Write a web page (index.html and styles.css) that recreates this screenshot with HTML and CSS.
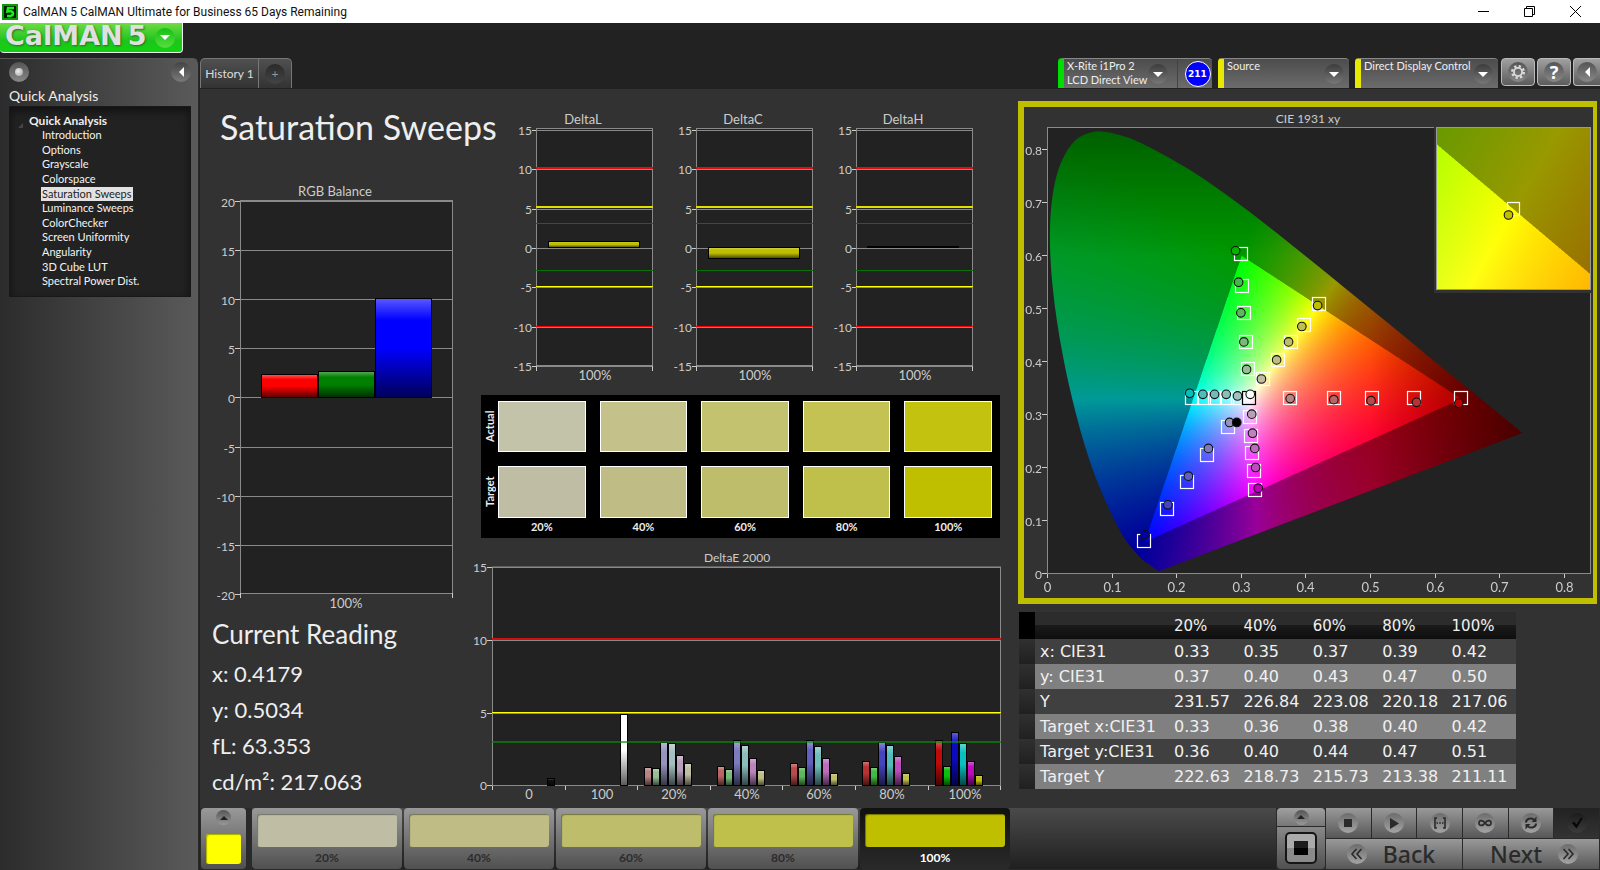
FILE: index.html
```html
<!DOCTYPE html>
<html lang="en">
<head>
<meta charset="utf-8">
<title>CalMAN 5 CalMAN Ultimate for Business</title>
<link rel="stylesheet" href="styles.css">
</head>
<body>
<header class="titlebar">
  <svg class="app-icon" viewBox="0 0 16 16" aria-hidden="true"><rect width="16" height="16" fill="#021a02"/><rect x="1" y="1" width="14" height="14" fill="none" stroke="#0c9a0c" stroke-width="2"/><path d="M12 4H6L5.500 7.500Q11 6.500 11 9.500Q11 12.500 5 12" fill="none" stroke="#19f019" stroke-width="2.600"/></svg>
  <span class="window-title">CalMAN 5 CalMAN Ultimate for Business 65 Days Remaining</span>
  <div class="window-buttons">
    <button aria-label="Minimize"><svg viewBox="0 0 11 11"><path d="M0 5.500H11"/></svg></button>
    <button aria-label="Restore"><svg viewBox="0 0 11 11"><path d="M.5 2.500H8.500V10.500H.5ZM2.500 2.500V.5H10.500V8.500H8.500"/></svg></button>
    <button aria-label="Close"><svg viewBox="0 0 11 11"><path d="M0 0L11 11M11 0L0 11"/></svg></button>
  </div>
</header>

<div class="brandbar">
  <button class="brand"><span class="brand-name">CalMAN</span><span class="brand-name">5</span><span class="brand-arrow"><i class="caret"></i></span></button>
</div>

<div class="workspace">
  <aside class="sidebar">
    <div class="sidebar-top">
      <button class="knob" aria-label="Pin"><i class="dot"></i></button>
      <button class="knob knob-flat" aria-label="Collapse"><i class="caret-left"></i></button>
    </div>
    <h2 class="sidebar-title">Quick Analysis</h2>
    <nav class="tree">
      <span class="tree-root">Quick Analysis</span>
      <ul class="tree-list">
        <li><a href="#">Introduction</a></li>
        <li><a href="#">Options</a></li>
        <li><a href="#">Grayscale</a></li>
        <li><a href="#">Colorspace</a></li>
        <li><a href="#" class="current">Saturation Sweeps</a></li>
        <li><a href="#">Luminance Sweeps</a></li>
        <li><a href="#">ColorChecker</a></li>
        <li><a href="#">Screen Uniformity</a></li>
        <li><a href="#">Angularity</a></li>
        <li><a href="#">3D Cube LUT</a></li>
        <li><a href="#">Spectral Power Dist.</a></li>
      </ul>
    </nav>
  </aside>

  <div class="stage">
    <div class="toolbar">
      <div class="tabs">
        <button class="tab">History 1</button>
        <button class="tab tab-add" aria-label="Add"><span class="plus">+</span></button>
      </div>
      <div class="devices">
        <div class="device device-on device-meter">
          <button class="device-main"><span>X-Rite i1Pro 2<br>LCD Direct View</span><span class="drop"><i class="caret"></i></span></button>
          <button class="badge-cell"><span class="badge">211</span></button>
        </div>
        <div class="device device-source">
          <button class="device-main"><span>Source</span><span class="drop"><i class="caret"></i></span></button>
        </div>
        <div class="device device-display">
          <button class="device-main"><span>Direct Display Control</span><span class="drop"><i class="caret"></i></span></button>
        </div>
        <button class="tool" aria-label="Settings"><span class="tool-disc"><svg viewBox="0 0 20 20"><circle cx="10" cy="10" r="4.500" fill="none" stroke="#ddd" stroke-width="2"/><circle cx="10" cy="10" r="6.500" fill="none" stroke="#ddd" stroke-width="2.500" stroke-dasharray="2.550 2.550"/></svg></span></button>
        <button class="tool" aria-label="Help"><span class="tool-disc">?</span></button>
        <button class="tool tool-last" aria-label="Hide"><span class="tool-disc"><i class="caret-left"></i></span></button>
      </div>
    </div>

    <main class="content">
      <section class="col col-left">
        <h1 class="page-title">Saturation Sweeps</h1>
        <svg id="rgb" class="chart rgb-chart" viewBox="200 180 272 432" role="img" aria-label="RGB Balance"></svg>
        <h2 class="reading-title">Current Reading</h2>
        <ul class="readings">
          <li>x: 0.4179</li>
          <li>y: 0.5034</li>
          <li>fL: 63.353</li>
          <li>cd/m²: 217.063</li>
        </ul>
      </section>

      <section class="col col-mid">
        <div class="deltas">
          <svg id="dl" class="chart" viewBox="512 110 160 275" role="img" aria-label="DeltaL"></svg>
          <svg id="dc" class="chart" viewBox="512 110 160 275" role="img" aria-label="DeltaC"></svg>
          <svg id="dh" class="chart" viewBox="512 110 160 275" role="img" aria-label="DeltaH"></svg>
        </div>
        <div class="swatches">
          <span class="swatch-side">Actual</span>
          <i class="swatch y20a"></i><i class="swatch y40a"></i><i class="swatch y60a"></i><i class="swatch y80a"></i><i class="swatch y100a"></i>
          <span class="swatch-side">Target</span>
          <i class="swatch y20"></i><i class="swatch y40"></i><i class="swatch y60"></i><i class="swatch y80"></i><i class="swatch y100"></i>
          <span></span><span class="swatch-label">20%</span><span class="swatch-label">40%</span><span class="swatch-label">60%</span><span class="swatch-label">80%</span><span class="swatch-label">100%</span>
        </div>
        <svg id="de" class="chart de-chart" viewBox="472 545 530 258" role="img" aria-label="DeltaE 2000"></svg>
      </section>

      <section class="col col-right">
        <div class="cie-panel">
          <svg id="cie" class="chart" viewBox="1024 107 569 491" role="img" aria-label="CIE 1931 xy"></svg>
        </div>
        <table class="data">
          <thead><tr><td class="grip"></td><th class="name"></th><th>20%</th><th>40%</th><th>60%</th><th>80%</th><th>100%</th></tr></thead>
          <tbody>
            <tr><td class="grip"></td><th class="name">x: CIE31</th><td>0.33</td><td>0.35</td><td>0.37</td><td>0.39</td><td>0.42</td></tr>
            <tr><td class="grip"></td><th class="name">y: CIE31</th><td>0.37</td><td>0.40</td><td>0.43</td><td>0.47</td><td>0.50</td></tr>
            <tr><td class="grip"></td><th class="name">Y</th><td>231.57</td><td>226.84</td><td>223.08</td><td>220.18</td><td>217.06</td></tr>
            <tr><td class="grip"></td><th class="name">Target x:CIE31</th><td>0.33</td><td>0.36</td><td>0.38</td><td>0.40</td><td>0.42</td></tr>
            <tr><td class="grip"></td><th class="name">Target y:CIE31</th><td>0.36</td><td>0.40</td><td>0.44</td><td>0.47</td><td>0.51</td></tr>
            <tr><td class="grip"></td><th class="name">Target Y</th><td>222.63</td><td>218.73</td><td>215.73</td><td>213.38</td><td>211.11</td></tr>
          </tbody>
        </table>
      </section>
    </main>

    <footer class="footer">
      <button class="picker" aria-label="Pattern colour"><span class="mini"><i class="caret-up"></i></span><i class="picker-color"></i></button>
      <div class="strip">
        <button class="step"><i class="step-color y20"></i>20%</button>
        <button class="step"><i class="step-color y40"></i>40%</button>
        <button class="step"><i class="step-color y60"></i>60%</button>
        <button class="step"><i class="step-color y80"></i>80%</button>
        <button class="step step-on"><i class="step-color y100"></i>100%</button>
      </div>
      <div class="window-picker">
        <button class="wp-top" aria-label="Window options"><span class="mini"><i class="caret-up"></i></span></button>
        <button class="wp-main" aria-label="Window size"><span class="wp-frame"><i class="wp-square"></i></span></button>
      </div>
      <div class="controls">
        <div class="control-row">
          <button class="ctl" aria-label="Stop"><span class="disc"><svg viewBox="0 0 20 20"><path d="M6 6H14V14H6Z"/></svg></span></button>
          <button class="ctl" aria-label="Play"><span class="disc"><svg viewBox="0 0 20 20"><path d="M6 5L15 10.500L6 16Z"/></svg></span></button>
          <button class="ctl" aria-label="Series"><span class="disc"><svg viewBox="0 0 20 20"><path d="M7 5H5V15H7M13 5H15V15H13" fill="none" stroke="#2a2a2a" stroke-width="1.600"/><path d="M6.500 9.200H8V10.800H6.500ZM9.200 9.200H10.800V10.800H9.200ZM12 9.200H13.500V10.800H12Z"/></svg></span></button>
          <button class="ctl" aria-label="Continuous"><span class="disc"><svg viewBox="0 0 20 20"><path d="M10 10C8 7 4 6.500 4 10S8 13 10 10S16 6.500 16 10S12 13 10 10Z" fill="none" stroke="#2a2a2a" stroke-width="1.700"/></svg></span></button>
          <button class="ctl" aria-label="Refresh"><span class="disc"><svg viewBox="0 0 20 20"><path d="M5 9.500C5 5.500 10 4.500 13 6.500M15 10.500C15 14.500 10 15.500 7 13.500" fill="none" stroke="#2a2a2a" stroke-width="2"/><path d="M15.500 3.500V9H10.500ZM4.500 16.500V11H9.500Z"/></svg></span></button>
          <button class="ctl ctl-dark" aria-label="Confirm"><span class="disc"><svg viewBox="0 0 20 20"><path d="M5 10L7 8.500L9.500 11.500L14 4.500L15.500 5.500L9.500 15.500Z" fill="#080808"/></svg></span></button>
        </div>
        <div class="control-row">
          <button class="nav nav-back"><span class="disc"><svg viewBox="0 0 20 20"><path d="M9.500 5L5 10L9.500 15M14.500 5L10 10L14.500 15" fill="none" stroke="#2a2a2a" stroke-width="1.600"/></svg></span><span>Back</span></button>
          <button class="nav nav-next"><span>Next</span><span class="disc"><svg viewBox="0 0 20 20"><path d="M5.500 5L10 10L5.500 15M10.500 5L15 10L10.500 15" fill="none" stroke="#2a2a2a" stroke-width="1.600"/></svg></span></button>
        </div>
      </div>
    </footer>
  </div>
</div>
<script src="charts.js"></script>
</body>
</html>
```
FILE: styles.css
```css
* { box-sizing: border-box; }
body {
  margin: 0;
  min-height: 100vh;
  display: flex;
  flex-direction: column;
  background: #222;
  color: #eee;
  font-family: Lato, "Open Sans", sans-serif;
  font-size: 12px;
}
button { margin: 0; padding: 0; border: 0; background: none; color: inherit; font: inherit; }
h1, h2, ul { margin: 0; padding: 0; font-weight: 400; }
ul { list-style: none; }
a { color: inherit; text-decoration: none; }

/* window chrome */
.titlebar { display: flex; align-items: center; height: 23px; padding-left: 2px; background: #fff; }
.app-icon { width: 16px; height: 16px; }
.window-title { margin-left: 5px; font-family: Roboto, sans-serif; font-size: 12px; line-height: 20px; color: #111; }
.window-buttons { display: flex; margin-left: auto; margin-right: 2px; }
.window-buttons button { display: grid; place-items: center; width: 46px; height: 21px; }
.window-buttons svg { width: 11px; height: 11px; fill: none; stroke: #000; }

.brandbar { height: 35px; }
.brand {
  display: flex;
  align-items: center;
  gap: 5px;
  width: 183px;
  height: 30px;
  padding: 0 0 3px 5px;
  border: solid #eee;
  border-width: 0 1px 1px 0;
  border-radius: 0 0 4px 4px;
  background: linear-gradient(#6fdc44, #1fc41c 60%, #0fd40f);
}
.brand-name { font: bold 27px/26px "DejaVu Sans", sans-serif; color: #e0e0e0; text-shadow: 1px 1px 2px #2b6b25; }
.brand-arrow { display: grid; place-items: center; width: 20px; height: 20px; margin: 3px 0 0 4px; border-radius: 50%; background: linear-gradient(#14c014, #58dd40); }
.caret { border: 5px solid transparent; border-top-color: #fff; border-bottom: 0; }
.caret-up { border: 4px solid transparent; border-bottom-color: #222; border-top: 0; }
.caret-left { border: 5px solid transparent; border-right-color: #fff; border-left: 0; }

.workspace { flex: 1; display: flex; }

/* sidebar */
.sidebar {
  flex: none;
  width: 199px;
  padding: 3px 7px 0 9px;
  border-right: 1px solid #2a2a2a;
  border-top: 1px solid #555;
  border-radius: 0 6px 0 0;
  background: linear-gradient(90deg, #2c2c2c, #5a5a5a);
}
.sidebar-top { display: flex; justify-content: space-between; }
.knob { display: grid; place-items: center; width: 20px; height: 20px; border-radius: 50%; background: linear-gradient(#555, #888); }
.knob-flat { background: linear-gradient(#444, #7a7a7a); }
.dot { width: 8px; height: 8px; border-radius: 50%; background: radial-gradient(circle at 40% 40%, #eee, #999); }
.sidebar-title { margin-top: 4px; font-size: 14px; line-height: 20px; }
.tree { height: 191px; padding: 6px 0 0 19px; border: 1px solid #181818; background: #222; box-shadow: inset 0 4px 8px #111; }
.tree-root { position: relative; display: block; font-weight: 700; font-size: 12px; line-height: 15px; }
.tree-root::before { content: ""; position: absolute; left: -11px; top: 5px; border: solid transparent; border-width: 5px 0 0 5px; border-right: 0; border-bottom: 5px solid #444; }
.tree-list { display: grid; grid-auto-rows: 1fr; height: 161px; padding-left: 12px; font-size: 11px; line-height: 14px; }
.tree-list a { display: block; width: fit-content; padding: 0 1px; color: #f4f4f4; }
.tree-list .current { background: #e2e2e2; color: #222; }

.stage { flex: 1; min-width: 0; display: flex; flex-direction: column; padding-left: 1px; }

/* toolbar */
.toolbar { display: flex; justify-content: space-between; align-items: flex-start; height: 31px; }
.tabs { display: flex; height: 30px; border: 1px solid #777; border-bottom: 0; border-radius: 5px 5px 0 0; background: linear-gradient(#505050, #333); }
.tab { width: 58px; font-size: 12px; color: #ddd; border-right: 1px solid #777; }
.tab-add { display: grid; place-items: center; width: 32px; border: 0; }
.plus { width: 20px; height: 20px; border-radius: 50%; background: linear-gradient(#2a2a2a, #444); line-height: 19px; color: #999; }

.devices { display: flex; gap: 6px; }
.device { display: flex; height: 30px; border-left: 6px solid #e8e800; border-top: 1px solid #888; border-radius: 4px 4px 0 0; background: linear-gradient(#4c4c4c, #6c6c6c); }
.device-on { border-left-color: #0d0; }
.device-meter { width: 154px; }
.device-source { width: 131px; }
.device-display { width: 143px; }
.device-main { flex: 1; display: flex; justify-content: space-between; text-align: left; padding: 0 5px 0 3px; font-size: 11px; line-height: 14px; white-space: nowrap; }
.device-main > span:first-child { width: 0; }
.drop { display: grid; place-items: center; width: 20px; height: 20px; margin-top: 5px; border-radius: 50%; background: linear-gradient(#3c3c3c, #777); }
.device-meter .drop { margin-right: 4px; }
.badge-cell { display: grid; place-items: center; width: 35px; border-left: 1px solid #444; padding-left: 5px; }
.badge { width: 26px; height: 26px; border: 1px solid #fff; border-radius: 50%; background: #00f; font: bold 9px/24px "DejaVu Sans", sans-serif; color: #fff; text-align: center; }
.tool { display: grid; place-items: center; width: 34px; height: 28px; margin-right: -4px; border: 1px solid #bbb; border-radius: 4px; background: linear-gradient(#a0a0a0, #5c5c5c); }
.device-display + .tool { margin-left: -3px; }
.tool-last { width: 27px; margin-right: 0; border-right: 0; border-radius: 4px 0 0 4px; }
.tool-disc { display: grid; place-items: center; width: 20px; height: 20px; border-radius: 50%; background: linear-gradient(#555, #888); font: bold 18px/20px "Noto Sans", sans-serif; color: #fff; }
.tool-disc svg { width: 18px; height: 18px; }

/* page */
.content { flex: 1; display: grid; grid-template-columns: 272fr 530fr 598fr; align-items: start; background: #323232; }
.col { min-width: 0; }
.chart { display: block; width: 100%; height: auto; }
.chart text { fill: #ccc; font-size: 13px; }
.chart .small { font-size: 12px; }
.page-title { margin: 18px 0 33px 20px; font-size: 34px; line-height: 40px; white-space: nowrap; }
.reading-title { margin: 7px 0 7px 12px; font-size: 26px; line-height: 30px; }
.readings { margin-left: 12px; font-size: 22px; line-height: 36px; }

.deltas { display: grid; grid-template-columns: repeat(3, 1fr); padding: 21px 10px 0 40px; }
.swatches {
  display: grid;
  grid-template-columns: 17px repeat(4, 101fr) 87fr;
  grid-template-rows: 51px 52px 18px;
  row-gap: 14px;
  margin: 10px 2px 7px 9px;
  padding: 6px 8px 0 0;
  height: 143px;
  background: #000;
}
.swatch { border: 1px solid #fff; margin-right: 14px; }
.swatches .swatch:nth-child(6n) { margin-right: 0; }
.swatch-side { writing-mode: vertical-rl; transform: rotate(180deg); text-align: center; font-weight: 700; font-size: 11px; line-height: 17px; }
.swatch-label { margin: -14px 14px 0 0; font-weight: 700; font-size: 11px; line-height: 18px; text-align: center; }
.swatch-label:last-child { margin-right: 0; }

.y20a { background: #c2c3a9; } .y20 { background: #bfbea4; }
.y40a { background: #c4c28a; } .y40 { background: #bfbd85; }
.y60a { background: #c2c26f; } .y60 { background: #bebd6b; }
.y80a { background: #c3c253; } .y80 { background: #bfbf4c; }
.y100a { background: #c3c20e; } .y100 { background: #bfbf00; }

.col-right { padding: 12px 3px 0 16px; }
.cie-panel { border: 6px solid #bfbf00; border-right-width: 4px; }

.data { width: 497px; margin: 8px 0 0 1px; border-collapse: collapse; table-layout: fixed; font: 16px/25px "DejaVu Sans", sans-serif; color: #f0f0f0; }
.data th, .data td { height: 25px; padding: 0 0 0 5px; font-weight: 400; text-align: left; white-space: nowrap; }
.data .grip { width: 16px; background: linear-gradient(#303030, #202020); }
.data .name { width: 134px; }
.data thead { background: linear-gradient(#2c2c2c 48%, #1a1a1a 50%, #0e0e0e); font-size: 15px; }
.data thead th, .data thead td { height: 27px; padding-top: 2px; }
.data thead .grip { background: #000; }
.data tbody tr { background: #404040; }
.data tbody tr:nth-child(even) { background: #808080; }

/* footer */
.footer { display: flex; height: 62px; padding: 0 1px 1px 1px; background: #2a2a2a; }
.picker { display: flex; flex-direction: column; align-items: center; gap: 9px; width: 45px; padding-top: 2px; border-radius: 4px; background: linear-gradient(#999, #505050); }
.mini { display: grid; place-items: center; width: 15px; height: 15px; border-radius: 50%; background: linear-gradient(#555, #999); }
.picker-color { width: 35px; height: 30px; border-radius: 3px; background: #ff0; box-shadow: inset 1px 1px 1px #aa0; }
.strip { flex: 1; display: flex; gap: 2px; margin: 0 1px 0 6px; background: linear-gradient(#4a4a4a, #202020); }
.step { flex: 0 0 150px; display: flex; flex-direction: column; align-items: stretch; padding: 6px 5px 0; border-radius: 4px; background: linear-gradient(#999, #505050); color: #2c2c2c; font-weight: 700; line-height: 22px; }
.step-color { height: 36px; border-radius: 3px; box-shadow: inset 1px 1px 1px #0006; }
.step-on { background: linear-gradient(#111, #2a2a2a); color: #fff; }
.window-picker { display: flex; flex-direction: column; gap: 1px; width: 48px; margin-right: 1px; }
.wp-top { display: grid; place-items: center; height: 18px; border-radius: 4px 4px 0 0; background: linear-gradient(#a0a0a0, #777); }
.wp-main { flex: 1; display: grid; place-items: center; border-radius: 0 0 4px 4px; background: linear-gradient(#888, #505050); }
.wp-frame { display: grid; place-items: center; width: 32px; height: 32px; border: 2px solid #151515; border-radius: 5px; background: linear-gradient(#aaa 50%, #8a8a8a 50%); }
.wp-square { width: 14px; height: 14px; background: linear-gradient(#1c1c1c 50%, #000 50%); }
.controls { display: flex; flex-direction: column; gap: 1px; width: 273px; }
.control-row { flex: 1; display: flex; gap: 1px; }
.ctl, .nav { flex: 1; display: flex; align-items: center; justify-content: center; background: linear-gradient(#999, #575757); }
.nav { gap: 16px; font: 500 23px/28px "Noto Sans", sans-serif; color: #2a2a2a; }
.nav-back { padding-right: 6px; }
.nav-next { padding-left: 6px; }
.disc { display: grid; place-items: center; width: 20px; height: 20px; border-radius: 50%; background: linear-gradient(#6c6c6c, #a4a4a4); }
.ctl-dark { background: linear-gradient(#222, #333); }
.ctl-dark .disc { background: linear-gradient(#1c1c1c, #3c3c3c); }
.disc svg { width: 20px; height: 20px; fill: #2a2a2a; }
```
FILE: charts.js
```js
const NS = 'http://www.w3.org/2000/svg';

function add(parent, name, attrs, text) {
  const node = document.createElementNS(NS, name);
  for (const key in attrs) node.setAttribute(key, attrs[key]);
  if (text !== undefined) node.textContent = text;
  parent.appendChild(node);
  return node;
}
const line = (s, x1, y1, x2, y2, stroke, width = 1) =>
  add(s, 'line', { x1, y1, x2, y2, stroke, 'stroke-width': width });
const label = (s, x, y, text, anchor = 'middle', cls = anchor === 'end' ? 'small' : 'normal') =>
  add(s, 'text', { x, y, 'text-anchor': anchor, class: cls }, text);

const GRID = '#8a8a8a', TICK = '#ccc';

function gradient(svg, color) {
  const id = svg.id + color.slice(1);
  if (!svg.querySelector('#' + id)) {
    const g = add(svg, 'linearGradient', { id, x1: 0, y1: 0, x2: 0, y2: 1 });
    const mix = (f, t) => '#' + [1, 3, 5].map(i => {
      const v = parseInt(color.substr(i, 2), 16);
      return Math.round(v + (t - v) * f).toString(16).padStart(2, '0');
    }).join('');
    [[0, mix(.35, 255)], [.22, color], [.5, color], [1, mix(.65, 0)]]
      .forEach(([offset, c]) => add(g, 'stop', { offset, 'stop-color': c }));
  }
  return `url(#${id})`;
}
const bar = (s, x, y, w, h, color) =>
  add(s, 'rect', { x: x + .5, y: y + .5, width: w - 1, height: h - 1, fill: gradient(s, color), stroke: '#000' });

function frame(s, x1, y1, x2, y2) {
  add(s, 'rect', { x: x1, y: y1, width: x2 - x1, height: y2 - y1, fill: '#222', stroke: GRID });
}

/* RGB balance */
(function () {
  const s = document.getElementById('rgb');
  label(s, 335, 196, 'RGB Balance');
  frame(s, 240.5, 200.5, 452.5, 593.5);
  for (let i = 0; i <= 8; i++) {
    const y = Math.round(201 + i * 49.1) + .5;
    if (i < 8) line(s, 241, y, 452, y, GRID);
    line(s, 235, y, 240, y, TICK);
    label(s, 235, y + 5, 20 - i * 5, 'end');
  }
  line(s, 240.5, 593, 240.5, 598, TICK);
  line(s, 452.5, 593, 452.5, 598, TICK);
  bar(s, 261, 374, 57, 24, '#ff0000');
  bar(s, 318, 371, 57, 27, '#008000');
  bar(s, 375, 298, 57, 100, '#0000ff');
  label(s, 346, 608, '100%');
})();

/* DeltaL, DeltaC, DeltaH */
[['dl', 'DeltaL', 241, 7, 548], ['dc', 'DeltaC', 247, 12, 548], ['dh', 'DeltaH', 246, 2, 547]].forEach(([id, name, y0, h, x0]) => {
  const s = document.getElementById(id);
  label(s, 583, 124, name);
  frame(s, 536.5, 128.5, 652.5, 365.5);
  for (let i = 0; i <= 6; i++) {
    const y = Math.round(130 + i * 39.3) + .5;
    line(s, 537, y, 652, y, GRID);
    line(s, 532, y, 536, y, TICK);
    label(s, 532, y + 4, 15 - i * 5, 'end');
  }
  [[168, '#dc1010', 2], [207, '#e0e000', 2], [223.5, '#0a700a', 1], [270.5, '#0a700a', 1], [286.5, '#ffff00', 1], [326.5, '#ff0000', 1]]
    .forEach(([y, c, w]) => line(s, 536, y, 653, y, c, w));
  line(s, 536.5, 366, 536.5, 371, TICK);
  line(s, 652.5, 366, 652.5, 371, TICK);
  bar(s, x0, y0, 92, h, '#bfbf00');
  label(s, 595, 380, '100%');
});

/* DeltaE 2000 */
(function () {
  const s = document.getElementById('de');
  label(s, 737, 562, 'DeltaE 2000', 'middle', 'small');
  frame(s, 492.5, 567, 1000.5, 785.5);
  [[567, 15], [640, 10], [713, 5], [785, 0]].forEach(([y, t]) => {
    line(s, 492, y + .5, 1000, y + .5, GRID);
    line(s, 487, y + .5, 492, y + .5, TICK);
    label(s, 487, y + 5, t, 'end');
  });
  const colors = [
    ['#b98484', '#97bd97', '#9494bf', '#a3bfbf', '#b99fb9', '#bfbea4'],
    ['#b96565', '#79b979', '#7b7bbf', '#8cbcbc', '#bb84bb', '#bfbd85'],
    ['#b94a4a', '#5cb85c', '#6060bf', '#70bcbc', '#bc6cbc', '#bebd6b'],
    ['#b93232', '#42b942', '#4545bf', '#52bcbc', '#bc4cbc', '#bfbf4c'],
    ['#bf0a0a', '#0abf0a', '#0a0abf', '#0abfbf', '#bf0abf', '#bfbf0a']
  ];
  const tops = [
    [767, 768, 742, 743, 755, 763], [766, 769, 740, 745, 758, 770],
    [763, 767, 740, 746, 758, 773], [761, 767, 742, 745, 756, 773],
    [740, 766, 732, 743, 761, 775]
  ];
  bar(s, 547, 778, 8, 8, '#101010');
  bar(s, 620, 714, 8, 72, '#ffffff');
  [644, 717, 790, 862, 935].forEach((x, g) =>
    tops[g].forEach((y, i) => bar(s, x + i * 8, y, 8, 786 - y, colors[g][i])));
  line(s, 492, 639, 1001, 639, '#d00f0f', 2);
  line(s, 492, 712.5, 1001, 712.5, '#ffff00');
  add(s, 'line', { x1: 492, y1: 742, x2: 1001, y2: 742, stroke: '#0a8c0a', 'stroke-width': 2, opacity: .65 });
  ['0', '100', '20%', '40%', '60%', '80%', '100%'].forEach((t, i) => label(s, Math.round(529 + i * 72.6), 799, t));
  for (let i = 0; i <= 7; i++) {
    const x = Math.round(492 + i * 72.6) + .5;
    line(s, x, 786, x, 790, TICK);
  }
})();

/* CIE 1931 chromaticity diagram */
(function () {
  const s = document.getElementById('cie');
  const X0 = 1047.5, Y0 = 573.5, SX = 646.3, SY = 530;
  const px = x => X0 + x * SX, py = y => Y0 - y * SY;
  const locus = [[.1741, .005], [.1714, .0051], [.1644, .0109], [.1566, .0177], [.144, .0297], [.1241, .0578],
    [.1096, .0868], [.0913, .1327], [.0687, .2007], [.0454, .295], [.0235, .4127], [.0082, .5384], [.0039, .6548],
    [.0139, .7502], [.0389, .812], [.0743, .8338], [.1142, .8262], [.1547, .8059], [.2296, .7543], [.3016, .6923],
    [.3731, .6245], [.4441, .5547], [.5125, .4866], [.5752, .4242], [.627, .3725], [.6658, .334], [.6915, .3083],
    [.719, .2809], [.7347, .2653]];
  const R = [.64, .33], G = [.3, .6], B = [.15, .06];
  const side = (a, b, x, y) => (b[0] - a[0]) * (y - a[1]) - (b[1] - a[1]) * (x - a[0]);
  const clamp = v => Math.max(0, Math.min(1, v));

  function color(x, y) {
    y = Math.max(y, .001);
    const X = x / y, Z = (1 - x - y) / y;
    let rgb = [3.2406 * X - 1.5372 - .4986 * Z, -.9689 * X + 1.8758 + .0415 * Z, .0557 * X - .204 + 1.057 * Z];
    const max = Math.max(...rgb);
    const inside = side(R, G, x, y) > 0 && side(G, B, x, y) > 0 && side(B, R, x, y) > 0;
    let k = inside ? 1 : .6;
    k *= 1 - .5 * clamp((x - .5) / .22);
    k *= 1 - .38 * clamp((y - .6) / .24);
    return rgb.map(v => 255 * k * clamp(v / max));
  }

  function paint(x, y, w, h, toX, toY, clip) {
    const fo = add(s, 'foreignObject', { x, y, width: w, height: h });
    const canvas = document.createElement('canvas');
    canvas.width = w; canvas.height = h;
    canvas.style.display = 'block';
    const big = document.createElement('canvas');
    big.width = w * 2; big.height = h * 2;
    const bc = big.getContext('2d'), img = bc.createImageData(w * 2, h * 2);
    for (let j = 0, n = 0; j < h * 2; j++) for (let i = 0; i < w * 2; i++) {
      const c = color(toX(x + i / 2), toY(y + j / 2));
      img.data[n++] = c[0]; img.data[n++] = c[1]; img.data[n++] = c[2]; img.data[n++] = 255;
    }
    bc.putImageData(img, 0, 0);
    const ctx = canvas.getContext('2d');
    if (clip) {
      const p = locus.map(q => [px(q[0]) - x, py(q[1]) - y]);
      ctx.beginPath();
      ctx.moveTo(p[0][0], p[0][1]);
      for (let i = 0; i < p.length - 1; i++) {
        const a = p[Math.max(i - 1, 0)], b = p[i], c = p[i + 1], d = p[Math.min(i + 2, p.length - 1)];
        ctx.bezierCurveTo(b[0] + (c[0] - a[0]) / 6, b[1] + (c[1] - a[1]) / 6, c[0] - (d[0] - b[0]) / 6, c[1] - (d[1] - b[1]) / 6, c[0], c[1]);
      }
      ctx.closePath();
      ctx.clip();
    }
    ctx.drawImage(big, 0, 0, w, h);
    fo.appendChild(canvas);
  }

  label(s, 1308, 123, 'CIE 1931 xy', 'middle', 'small');
  frame(s, 1047.5, 127.5, 1590.5, 573.5);
  paint(1048, 128, 542, 445, x => (x - X0) / SX, y => (Y0 - y) / SY, true);
  for (let i = 0; i <= 8; i++) {
    const x = Math.round(1047 + i * 64.6) + .5, y = Math.round(573 - i * 53) + .5;
    line(s, x, 574, x, 578, TICK);
    label(s, x, 592, i ? '0.' + i : '0');
    line(s, 1042, y, 1047, y, TICK);
    label(s, 1042, y + 5, i ? '0.' + i : '0', 'end');
  }

  const square = (x, y, stroke = '#fff', w = 13, h = 13) =>
    add(s, 'rect', { x: Math.floor(x - w / 2) + .5, y: Math.floor(y - h / 2) + .5, width: w, height: h, fill: 'none', stroke, 'stroke-width': 1.2 });
  const dot = (x, y, fill) => add(s, 'circle', { cx: x, cy: y, r: 4.3, fill, stroke: '#111', 'stroke-width': 1.1 });

  [[.3, .602], [.3015, .543], [.3045, .491], [.3068, .437], [.31, .385],
    [.4197, .508], [.3965, .4685], [.377, .437], [.356, .403], [.333, .367],
    [.2235, .331], [.2415, .331], [.2597, .331], [.2777, .331], [.2945, .331],
    [.3755, .331], [.444, .331], [.5023, .331], [.567, .331], [.6397, .331],
    [.2794, .277], [.2462, .223], [.216, .173], [.185, .121], [.1496, .0617],
    [.3137, .295], [.3155, .259], [.3166, .227], [.319, .193], [.3207, .157]
  ].forEach(([x, y]) => square(px(x), py(y)));
  square(px(.312), py(.331), '#000');
  [[.291, .609, '#00b400'], [.2957, .5496, '#42b942'], [.2992, .4918, '#5cb85c'], [.3038, .437, '#79b979'], [.308, .385, '#97bd97'],
    [.4179, .5055, '#bfbf00'], [.3935, .466, '#bfbf4c'], [.373, .437, '#bebd6b'], [.3545, .403, '#bfbd85'], [.331, .367, '#bfbea4'],
    [.22, .34, '#00bfbf'], [.2404, .338, '#52bcbc'], [.2585, .338, '#70bcbc'], [.2765, .338, '#8cbcbc'], [.294, .335, '#a3bfbf'],
    [.3755, .33, '#b98484'], [.443, .328, '#b96565'], [.5006, .326, '#b94a4a'], [.571, .323, '#b93232'], [.6364, .321, '#bf0000'],
    [.2817, .285, '#9494bf'], [.2928, .285, '#000000'], [.249, .236, '#7b7bbf'], [.218, .1837, '#6060bf'], [.1863, .1296, '#4545bf'], [.151, .073, '#0000a8'],
    [.316, .3006, '#b99fb9'], [.3172, .2647, '#bb84bb'], [.3207, .236, '#bc6cbc'], [.322, .2, '#bc4cbc'], [.326, .161, '#bf00bf'],
    [.3137, .338, '#ffffff']
  ].forEach(([x, y, c]) => dot(px(x), py(y), c));

  /* magnified view around the current reading */
  add(s, 'rect', { x: 1434, y: 126, width: 159, height: 167, fill: '#323232' });
  paint(1437, 128, 153, 161, x => .4193 + (x - 1513.5) / 3100, y => .5053 - (y - 209) / 3300, false);
  add(s, 'rect', { x: 1436.5, y: 127.5, width: 154, height: 162, fill: 'none', stroke: '#999' });
  square(1513, 209, '#fff', 12, 13);
  dot(1508.5, 215, '#bfbf00');
})();
```
